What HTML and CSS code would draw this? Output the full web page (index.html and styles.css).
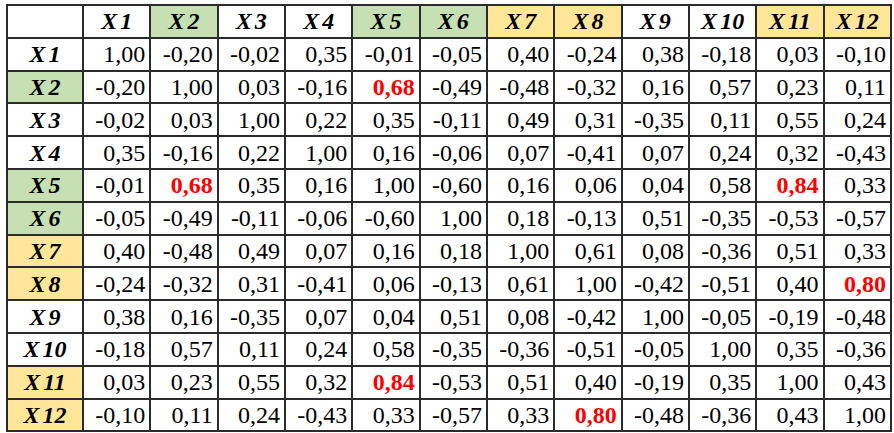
FILE: index.html
```html
<!DOCTYPE html>
<html lang="pt-BR">
<head>
    <meta charset="UTF-8">
    <meta name="viewport" content="width=device-width, initial-scale=1.0">
    <title>Matriz de correlação</title>
    <link rel="stylesheet" href="styles.css">
</head>
<body>
    <table class="matriz">
        <tr>
            <th class="canto"></th>
            <th>X<span class="idx">1</span></th>
            <th class="verde">X<span class="idx">2</span></th>
            <th>X<span class="idx">3</span></th>
            <th>X<span class="idx">4</span></th>
            <th class="verde">X<span class="idx">5</span></th>
            <th class="verde">X<span class="idx">6</span></th>
            <th class="amarelo">X<span class="idx">7</span></th>
            <th class="amarelo">X<span class="idx">8</span></th>
            <th>X<span class="idx">9</span></th>
            <th>X<span class="idx">10</span></th>
            <th class="amarelo">X<span class="idx">11</span></th>
            <th class="amarelo">X<span class="idx">12</span></th>
        </tr>
        <tr>
            <th>X<span class="idx">1</span></th>
            <td>1,00</td><td>-0,20</td><td>-0,02</td><td>0,35</td><td>-0,01</td><td>-0,05</td><td>0,40</td><td>-0,24</td><td>0,38</td><td>-0,18</td><td>0,03</td><td>-0,10</td>
        </tr>
        <tr>
            <th class="verde">X<span class="idx">2</span></th>
            <td>-0,20</td><td>1,00</td><td>0,03</td><td>-0,16</td><td class="forte">0,68</td><td>-0,49</td><td>-0,48</td><td>-0,32</td><td>0,16</td><td>0,57</td><td>0,23</td><td>0,11</td>
        </tr>
        <tr>
            <th>X<span class="idx">3</span></th>
            <td>-0,02</td><td>0,03</td><td>1,00</td><td>0,22</td><td>0,35</td><td>-0,11</td><td>0,49</td><td>0,31</td><td>-0,35</td><td>0,11</td><td>0,55</td><td>0,24</td>
        </tr>
        <tr>
            <th>X<span class="idx">4</span></th>
            <td>0,35</td><td>-0,16</td><td>0,22</td><td>1,00</td><td>0,16</td><td>-0,06</td><td>0,07</td><td>-0,41</td><td>0,07</td><td>0,24</td><td>0,32</td><td>-0,43</td>
        </tr>
        <tr>
            <th class="verde">X<span class="idx">5</span></th>
            <td>-0,01</td><td class="forte">0,68</td><td>0,35</td><td>0,16</td><td>1,00</td><td>-0,60</td><td>0,16</td><td>0,06</td><td>0,04</td><td>0,58</td><td class="forte">0,84</td><td>0,33</td>
        </tr>
        <tr>
            <th class="verde">X<span class="idx">6</span></th>
            <td>-0,05</td><td>-0,49</td><td>-0,11</td><td>-0,06</td><td>-0,60</td><td>1,00</td><td>0,18</td><td>-0,13</td><td>0,51</td><td>-0,35</td><td>-0,53</td><td>-0,57</td>
        </tr>
        <tr>
            <th class="amarelo">X<span class="idx">7</span></th>
            <td>0,40</td><td>-0,48</td><td>0,49</td><td>0,07</td><td>0,16</td><td>0,18</td><td>1,00</td><td>0,61</td><td>0,08</td><td>-0,36</td><td>0,51</td><td>0,33</td>
        </tr>
        <tr>
            <th class="amarelo">X<span class="idx">8</span></th>
            <td>-0,24</td><td>-0,32</td><td>0,31</td><td>-0,41</td><td>0,06</td><td>-0,13</td><td>0,61</td><td>1,00</td><td>-0,42</td><td>-0,51</td><td>0,40</td><td class="forte">0,80</td>
        </tr>
        <tr>
            <th>X<span class="idx">9</span></th>
            <td>0,38</td><td>0,16</td><td>-0,35</td><td>0,07</td><td>0,04</td><td>0,51</td><td>0,08</td><td>-0,42</td><td>1,00</td><td>-0,05</td><td>-0,19</td><td>-0,48</td>
        </tr>
        <tr>
            <th>X<span class="idx">10</span></th>
            <td>-0,18</td><td>0,57</td><td>0,11</td><td>0,24</td><td>0,58</td><td>-0,35</td><td>-0,36</td><td>-0,51</td><td>-0,05</td><td>1,00</td><td>0,35</td><td>-0,36</td>
        </tr>
        <tr>
            <th class="amarelo">X<span class="idx">11</span></th>
            <td>0,03</td><td>0,23</td><td>0,55</td><td>0,32</td><td class="forte">0,84</td><td>-0,53</td><td>0,51</td><td>0,40</td><td>-0,19</td><td>0,35</td><td>1,00</td><td>0,43</td>
        </tr>
        <tr>
            <th class="amarelo">X<span class="idx">12</span></th>
            <td>-0,10</td><td>0,11</td><td>0,24</td><td>-0,43</td><td>0,33</td><td>-0,57</td><td>0,33</td><td class="forte">0,80</td><td>-0,48</td><td>-0,36</td><td>0,43</td><td>1,00</td>
        </tr>
    </table>
</body>
</html>
```

FILE: styles.css
```css
* {
    margin: 0;
    padding: 0;
    box-sizing: border-box;
}
html, body {
    background-color: #ffffff;
    color: #000000;
}
body {
    padding: 4px 0 0 6px;
}
.matriz {
    border-collapse: collapse;
    table-layout: fixed;
    width: 886px;
    height: 427px;
}
.matriz th,
.matriz td {
    border: 2px solid #2b2b2b;
    height: 32.8px;
    line-height: 1;
    white-space: nowrap;
    font-family: "Liberation Serif", serif;
    font-size: 24px;
}
.matriz th {
    font-style: italic;
    font-weight: bold;
    text-align: center;
}
.matriz tr th:first-child {
    width: 76px;
}
.matriz td {
    text-align: right;
    padding-right: 4px;
}
.idx {
    margin-left: 3px;
}
.verde {
    background: #c6e0b4;
}
.amarelo {
    background: #ffe699;
}
.forte {
    color: #ff0000;
    font-weight: bold;
}
```
